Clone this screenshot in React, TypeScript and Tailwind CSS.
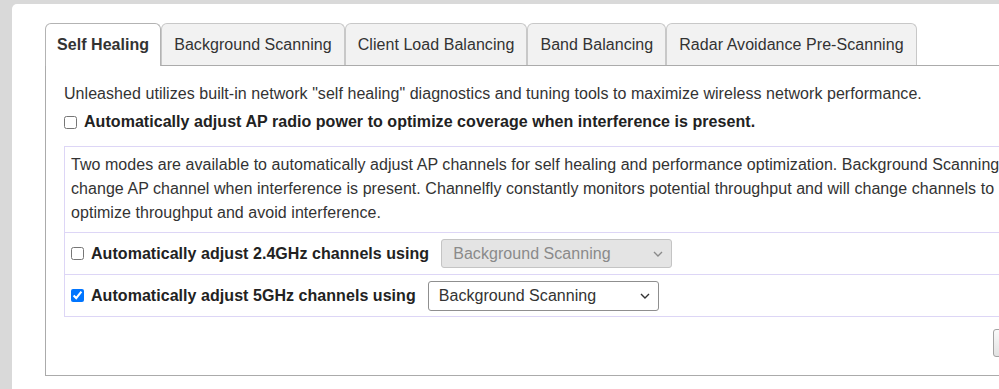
import React from "react";

const tabs = [
  "Self Healing",
  "Background Scanning",
  "Client Load Balancing",
  "Band Balancing",
  "Radar Avoidance Pre-Scanning",
];

const Chevron = () => (
  <svg width="10" height="6" viewBox="0 0 10 6" className="pointer-events-none absolute right-[9px] top-1/2 -translate-y-1/2">
    <polyline points="1,1 5,5 9,1" fill="none" stroke="currentColor" strokeWidth="1.4" />
  </svg>
);

const ModeSelect = ({ disabled }: { disabled?: boolean }) => (
  <div
    className={
      disabled
        ? "relative ml-[12px] text-[#8a8a8a]"
        : "relative ml-[12px] text-[#333]"
    }
  >
    <select
      disabled={disabled}
      defaultValue="bg"
      className={
        disabled
          ? "appearance-none w-[231px] h-[29px] pl-[11px] border border-[#c4c4c4] rounded-[3px] bg-[#e4e4e4] text-[16px] leading-[27px]"
          : "appearance-none w-[231px] h-[30px] pl-[10px] border border-[#8f8f8f] rounded-[3px] bg-white text-[16px] leading-[28px]"
      }
    >
      <option value="bg">Background Scanning</option>
      <option value="cf">ChannelFly</option>
    </select>
    <Chevron />
  </div>
);

const App = () => {
  return (
    <div className="h-[389px] w-[999px] overflow-hidden bg-[#d9d9d9] pl-[12px] pt-[4px] font-['Liberation_Sans',Arial,sans-serif] text-[16px] tracking-[0.05px] text-[#333]">
      <div className="w-[1100px] h-[420px] bg-white rounded-tl-[5px] pl-[33px] pt-[19px]">
        <div className="flex h-[42px] items-stretch">
          {tabs.map((t, i) =>
            i === 0 ? (
              <div
                key={t}
                className="relative z-10 -mb-px flex h-[43px] items-center px-[11px] border border-b-0 border-[#b3b3b3] rounded-t-[6px] bg-white font-bold"
              >
                {t}
              </div>
            ) : (
              <div
                key={t}
                className="flex items-center px-[12px] border border-b-0 border-[#c8c8c8] rounded-t-[6px] bg-[#f2f2f2]"
              >
                {t}
              </div>
            )
          )}
        </div>
        <div className="w-[1032px] border-t border-l border-b border-[#ababab] px-[18px] pt-[18px] pb-[18px]">
          <p className="leading-[20px]">
            Unleashed utilizes built-in network "self healing" diagnostics and tuning tools to maximize wireless network performance.
          </p>
          <label className="mt-[6px] flex h-[24px] items-center font-bold text-[#222]">
            <input type="checkbox" className="m-0 h-[13px] w-[13px]" />
            <span className="ml-[7px]">
              Automatically adjust AP radio power to optimize coverage when interference is present.
            </span>
          </label>

          <div className="mt-[12px] border border-[#ddd6f6]">
            <div className="px-[6px] pt-[6px] pb-[7px] leading-[24px] whitespace-nowrap">
              Two modes are available to automatically adjust AP channels for self healing and performance optimization. Background Scanning will
              <br />
              change AP channel when interference is present. Channelfly constantly monitors potential throughput and will change channels to
              <br />
              optimize throughput and avoid interference.
            </div>
            <div className="flex h-[42px] items-center border-t border-[#ddd6f6] px-[6px]">
              <input type="checkbox" className="m-0 h-[13px] w-[13px]" />
              <span className="ml-[7px] font-bold text-[#222]">Automatically adjust 2.4GHz channels using</span>
              <ModeSelect disabled />
            </div>
            <div className="flex h-[42px] items-center border-t border-[#ddd6f6] px-[6px]">
              <input type="checkbox" defaultChecked className="m-0 h-[13px] w-[13px]" />
              <span className="ml-[7px] font-bold text-[#222]">Automatically adjust 5GHz channels using</span>
              <ModeSelect />
            </div>
          </div>

          <div className="mt-[12px] flex justify-end">
            <button className="h-[28px] w-[66px] border border-[#a3a3a3] rounded-[3px] bg-gradient-to-b from-[#fafafa] to-[#e2e2e2] text-[14px] text-[#333]">
              Apply
            </button>
          </div>
        </div>
      </div>
    </div>
  );
};

export default App;
